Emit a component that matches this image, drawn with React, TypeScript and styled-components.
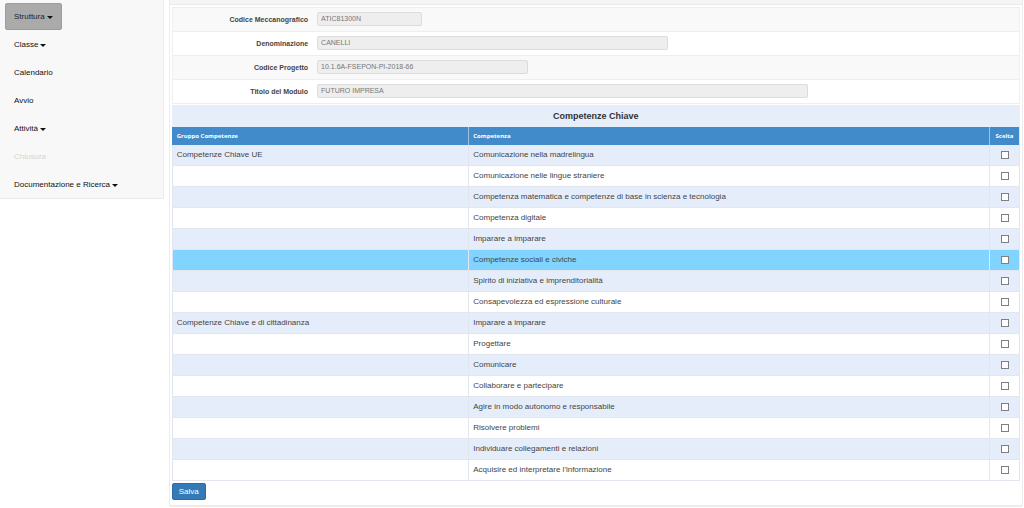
import React from "react";
import styled, { createGlobalStyle } from "styled-components";

const GlobalStyle = createGlobalStyle`
  *, *::before, *::after { box-sizing: border-box; }
  body {
    margin: 0;
    background: #fff;
    color: #444;
    font: 8px/12px "Liberation Sans", Arial, sans-serif;
  }
  button, input { font: inherit; }
`;

const Page = styled.div`
  display: flex;
  align-items: flex-start;
  gap: 6px;
  padding-right: 1px;
`;

const Sidebar = styled.nav`
  flex: 0 0 16%;
  margin-right: -1px;
  background: #f8f8f8;
  border: solid #ececec;
  border-width: 0 1px 1px 0;
  border-radius: 0 0 2px 0;
`;

const MenuList = styled.ul`
  display: flex;
  flex-direction: column;
  align-items: flex-start;
  gap: 1px;
  margin: 0;
  padding: 3px 5px 0;
  list-style: none;
`;

const MenuButton = styled.button<{ $active?: boolean }>`
  display: flex;
  align-items: center;
  gap: 2px;
  height: 27px;
  padding: 0 8px;
  border: 1px solid ${(p) => (p.$active ? "#9c9c9c" : "transparent")};
  border-radius: 2px;
  background: ${(p) => (p.$active ? "#aaa" : "transparent")};
  color: ${(p) => (p.$active ? "#222" : "#111")};
  white-space: nowrap;
  text-decoration: none;
  cursor: pointer;
  &:disabled {
    color: #d4d4d4;
    cursor: default;
  }
`;

const Caret = styled.span`
  margin-top: 1px;
  border: solid transparent;
  border-width: 3px 3px 0;
  border-top-color: #111;
`;

const Panel = styled.main`
  flex: 1;
  min-width: 0;
  border: solid #ececec;
  border-width: 0 1px 2px;
  border-radius: 0 0 2px 2px;
`;

const PanelHeading = styled.div`
  height: 5px;
  background: #f5f5f5;
  border-bottom: 1px solid #eaeaea;
`;

const PanelBody = styled.form`
  padding: 2px 2px 5px;
`;

const Details = styled.div`
  margin-bottom: 1px;
  border: solid #eee;
  border-width: 1px 1px 0;
`;

const Field = styled.div`
  display: flex;
  align-items: center;
  gap: 9px;
  height: 24px;
  padding-bottom: 2px;
  border-bottom: 1px solid #eee;
  &:nth-child(odd) {
    background: #f9f9f9;
  }
`;

const FieldLabel = styled.label`
  flex: 0 0 16%;
  padding-top: 3px;
  text-align: right;
  font-weight: bold;
  font-size: 7px;
  color: #444;
`;

const FieldControl = styled.div`
  display: flex;
  flex: 1;
`;

const ReadOnlyInput = styled.input<{ $share: number }>`
  width: ${(p) => p.$share}%;
  height: 14px;
  padding: 0 3px;
  border: 1px solid #dcdcdc;
  border-radius: 2px;
  background: #eee;
  color: #777;
  font-size: 7px;
`;

const SkillsTable = styled.table`
  width: 100%;
  table-layout: fixed;
  border-collapse: separate;
  border-spacing: 0;
  border-right: 1px solid #e6e6ea;
`;

const Caption = styled.caption`
  height: 22px;
  background: #e6eefa;
  color: #333;
  font-size: 9px;
  font-weight: bold;
  line-height: 22px;
`;

const GroupCol = styled.col`
  width: 35%;
`;

const ChoiceCol = styled.col`
  width: 30px;
`;

const HeadCell = styled.th<{ $center?: boolean }>`
  height: 18px;
  padding: 0 4px;
  border-left: 1px solid #9cc3e6;
  background: #428bca;
  color: #fff;
  font: bold 6px/12px "Open Sans", sans-serif;
  text-align: ${(p) => (p.$center ? "center" : "left")};
  &:first-child {
    border-left-color: #428bca;
  }
`;

const Row = styled.tr<{ $highlight?: boolean }>`
  background: ${(p) => (p.$highlight ? "#80d4ff" : "#fff")};
  &:nth-child(odd) {
    background: #e6edfa;
  }
`;

const Cell = styled.td<{ $center?: boolean }>`
  height: 21px;
  padding: 0 4px;
  border: solid #e2e6ee;
  border-width: 0 0 1px 1px;
  text-align: ${(p) => (p.$center ? "center" : "left")};
`;

const Checkbox = styled.input`
  display: block;
  appearance: none;
  width: 8px;
  height: 8px;
  margin: 0 auto;
  border: 1px solid #808080;
  background: #fff;
  &:checked {
    background: #337ab7;
  }
`;

const SaveButton = styled.button`
  display: block;
  height: 17px;
  margin-top: 2px;
  padding: 0 6px;
  border: 1px solid #2e6da4;
  border-radius: 2px;
  background: #337ab7;
  color: #fff;
  cursor: pointer;
`;

const menu = [
  { label: "Struttura", caret: true, active: true },
  { label: "Classe", caret: true },
  { label: "Calendario" },
  { label: "Avvio" },
  { label: "Attività", caret: true },
  { label: "Chiusura", disabled: true },
  { label: "Documentazione e Ricerca", caret: true },
];

const fields = [
  { id: "codice", label: "Codice Meccanografico", value: "ATIC81300N", share: 15 },
  { id: "denominazione", label: "Denominazione", value: "CANELLI", share: 50 },
  { id: "progetto", label: "Codice Progetto", value: "10.1.6A-FSEPON-PI-2018-66", share: 30 },
  { id: "modulo", label: "Titolo del Modulo", value: "FUTURO IMPRESA", share: 70 },
];

const skills: { name: string; group?: string; highlight?: boolean }[] = [
  { group: "Competenze Chiave UE", name: "Comunicazione nella madrelingua" },
  { name: "Comunicazione nelle lingue straniere" },
  { name: "Competenza matematica e competenze di base in scienza e tecnologia" },
  { name: "Competenza digitale" },
  { name: "Imparare a imparare" },
  { name: "Competenze sociali e civiche", highlight: true },
  { name: "Spirito di iniziativa e imprenditorialità" },
  { name: "Consapevolezza ed espressione culturale" },
  { group: "Competenze Chiave e di cittadinanza", name: "Imparare a imparare" },
  { name: "Progettare" },
  { name: "Comunicare" },
  { name: "Collaborare e partecipare" },
  { name: "Agire in modo autonomo e responsabile" },
  { name: "Risolvere problemi" },
  { name: "Individuare collegamenti e relazioni" },
  { name: "Acquisire ed interpretare l'informazione" },
];

export default function App() {
  return (
    <>
      <GlobalStyle />
      <Page>
        <Sidebar>
          <MenuList>
            {menu.map((item) => (
              <li key={item.label}>
                {item.caret || item.disabled ? (
                  <MenuButton type="button" $active={item.active} disabled={item.disabled}>
                    {item.label}
                    {item.caret && <Caret />}
                  </MenuButton>
                ) : (
                  <MenuButton as="a" href="#">
                    {item.label}
                  </MenuButton>
                )}
              </li>
            ))}
          </MenuList>
        </Sidebar>
        <Panel>
          <PanelHeading />
          <PanelBody onSubmit={(e) => e.preventDefault()}>
            <Details>
              {fields.map((f) => (
                <Field key={f.id}>
                  <FieldLabel htmlFor={f.id}>{f.label}</FieldLabel>
                  <FieldControl>
                    <ReadOnlyInput id={f.id} type="text" readOnly value={f.value} $share={f.share} />
                  </FieldControl>
                </Field>
              ))}
            </Details>
            <SkillsTable>
              <Caption>Competenze Chiave</Caption>
              <colgroup>
                <GroupCol />
                <col />
                <ChoiceCol />
              </colgroup>
              <thead>
                <tr>
                  <HeadCell scope="col">Gruppo Competenze</HeadCell>
                  <HeadCell scope="col">Competenza</HeadCell>
                  <HeadCell scope="col" $center>Scelta</HeadCell>
                </tr>
              </thead>
              <tbody>
                {skills.map((s, i) => (
                  <Row key={i} $highlight={s.highlight}>
                    <Cell>{s.group}</Cell>
                    <Cell>{s.name}</Cell>
                    <Cell $center>
                      <Checkbox type="checkbox" aria-label={s.name} />
                    </Cell>
                  </Row>
                ))}
              </tbody>
            </SkillsTable>
            <SaveButton type="submit">Salva</SaveButton>
          </PanelBody>
        </Panel>
      </Page>
    </>
  );
}
